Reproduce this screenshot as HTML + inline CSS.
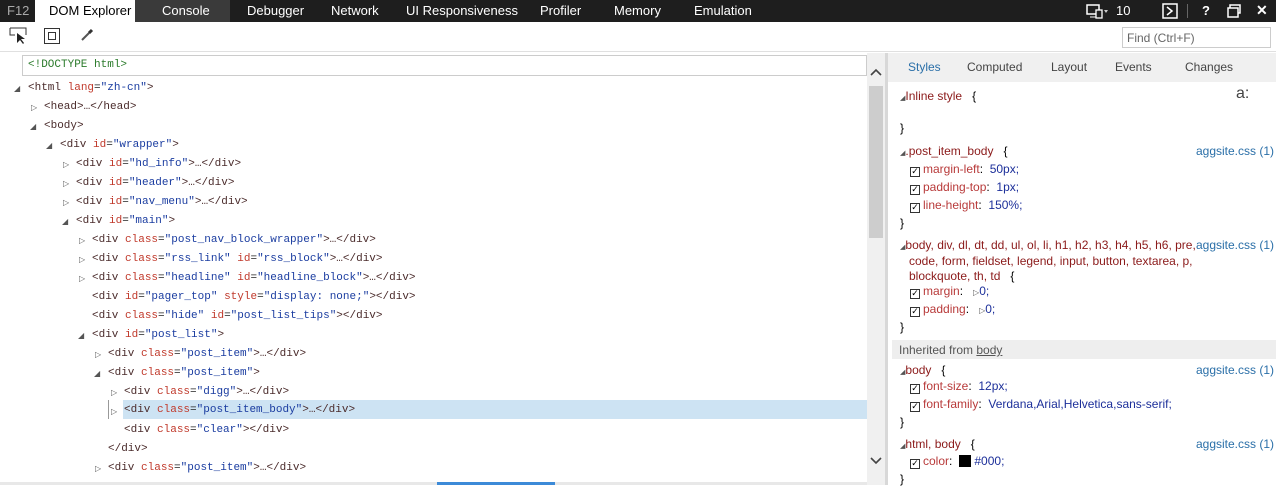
<!DOCTYPE html>
<html><head><meta charset="utf-8"><style>
*{margin:0;padding:0;box-sizing:border-box}
body{width:1276px;height:485px;overflow:hidden;background:#fff;font-family:"Liberation Sans",sans-serif;position:relative}
.top{position:absolute;left:0;top:0;width:1276px;height:22px;background:#1e1e1e;color:#fff;font-size:13px}
.top span{position:absolute;top:3px}
.tb{position:absolute;top:22px;left:0;width:1276px;height:30px;background:#fff;border-bottom:1px solid #e0e0e0}
.left{position:absolute;left:0;top:53px;width:867px;height:432px}
#rows{font-family:"Liberation Mono",monospace;font-size:11px}
.row{position:absolute;height:19px;line-height:19px;white-space:pre;color:#222}
.t{color:#4a2b2b}.a{color:#c0392b}.v{color:#1a3ca0}
.tri{position:absolute;font-size:8px;color:#555;font-family:"DejaVu Sans",sans-serif;line-height:10px}
.right{position:absolute;left:888px;top:53px;width:388px;height:432px;font-size:12px}
.r{position:absolute;white-space:nowrap;line-height:18px}
.sel{color:#8b1a1a}.p{color:#b83a3a}.val{color:#1c2f9a}
.lnk{position:absolute;right:2px;color:#2a6fa8}
.cb{display:inline-block;width:10px;height:10px;border:1px solid #333;vertical-align:-1px;margin-right:3px;font-size:9px;line-height:8px;text-align:center;font-family:"DejaVu Sans",sans-serif}
</style></head><body>
<div class="top">
<span style="left:7px;color:#aaa">F12</span>
<div style="position:absolute;left:35px;top:0;width:100px;height:22px;background:#fff"></div>
<span style="left:49px;color:#000">DOM Explorer</span>
<div style="position:absolute;left:135px;top:0;width:95px;height:22px;background:#3a3a3a"></div>
<span style="left:162px">Console</span>
<span style="left:247px">Debugger</span>
<span style="left:331px">Network</span>
<span style="left:406px">UI Responsiveness</span>
<span style="left:540px">Profiler</span>
<span style="left:614px">Memory</span>
<span style="left:694px">Emulation</span>
<svg style="position:absolute;left:1086px;top:4px" width="22" height="15"><rect x="1" y="1" width="12" height="9" fill="none" stroke="#fff" stroke-width="1.5"/><rect x="10" y="6" width="6" height="8" fill="#1e1e1e" stroke="#fff" stroke-width="1.3"/><path d="M4 13h6" stroke="#fff"/><path d="M18 6l2 3 2-3z" fill="#ccc"/></svg>
<span style="left:1116px">10</span>
<svg style="position:absolute;left:1162px;top:3px" width="16" height="16"><rect x="1" y="1" width="14" height="14" fill="none" stroke="#fff" stroke-width="1.5"/><path d="M5 4l5 4-5 4" fill="none" stroke="#fff" stroke-width="1.5"/></svg>
<div style="position:absolute;left:1187px;top:4px;width:1px;height:14px;background:#666"></div>
<span style="left:1202px;font-weight:bold">?</span>
<svg style="position:absolute;left:1227px;top:4px" width="14" height="14"><rect x="3" y="1" width="10" height="8" fill="none" stroke="#fff" stroke-width="1.5"/><rect x="1" y="4" width="10" height="9" fill="#1e1e1e" stroke="#fff" stroke-width="1.5"/></svg>
<span style="left:1256px;font-weight:bold;font-size:14px;top:2px">✕</span>
</div>
<div class="tb">
<svg style="position:absolute;left:9px;top:5px" width="20" height="18"><path d="M1 1h16v7" fill="none" stroke="#333"/><path d="M1 1v7h5" fill="none" stroke="#333"/><path d="M8 6l0 10 3-3 3 4 1-1-3-4h4z" fill="#222"/></svg>
<svg style="position:absolute;left:44px;top:6px" width="16" height="16"><rect x="0.5" y="0.5" width="15" height="15" fill="none" stroke="#333"/><rect x="4.5" y="4.5" width="7" height="7" fill="none" stroke="#333"/></svg>
<svg style="position:absolute;left:80px;top:6px" width="14" height="14"><path d="M2 12l7-7" stroke="#555" stroke-width="2"/><path d="M9 5l3-3" stroke="#333" stroke-width="3"/></svg>
<div style="position:absolute;left:1122px;top:5px;width:149px;height:21px;border:1px solid #ccc;font-size:12px;color:#666;padding:3px 4px">Find (Ctrl+F)</div>
</div>
<div class="left">
<div style="position:absolute;left:22px;top:2px;width:845px;height:21px;border:1px solid #ccc"></div>
<div style="position:absolute;left:123px;top:347px;width:744px;height:19px;background:#cde3f3"></div>
<div style="position:absolute;left:108px;top:347px;width:1px;height:19px;background:#999"></div>
</div>
<div id="rows" style="position:absolute;left:0;top:54px">
<div class="row" style="left:28px;top:2px;color:#2a7a2a">&lt;!DOCTYPE html&gt;</div>
<div class="tri" style="left:14px;top:30px">◢</div><div class="row" style="left:28px;top:25px"><span class="t">&lt;html</span> <span class="a">lang</span>=<span class="v">"zh-cn"</span><span class="t">&gt;</span></div>
<div class="tri" style="left:31px;top:49px">▷</div><div class="row" style="left:44px;top:44px"><span class="t">&lt;head&gt;…&lt;/head&gt;</span></div>
<div class="tri" style="left:30px;top:68px">◢</div><div class="row" style="left:44px;top:63px"><span class="t">&lt;body&gt;</span></div>
<div class="tri" style="left:46px;top:87px">◢</div><div class="row" style="left:60px;top:82px"><span class="t">&lt;div</span> <span class="a">id</span>=<span class="v">"wrapper"</span><span class="t">&gt;</span></div>
<div class="tri" style="left:63px;top:106px">▷</div><div class="row" style="left:76px;top:101px"><span class="t">&lt;div</span> <span class="a">id</span>=<span class="v">"hd_info"</span><span class="t">&gt;…&lt;/div&gt;</span></div>
<div class="tri" style="left:63px;top:125px">▷</div><div class="row" style="left:76px;top:120px"><span class="t">&lt;div</span> <span class="a">id</span>=<span class="v">"header"</span><span class="t">&gt;…&lt;/div&gt;</span></div>
<div class="tri" style="left:63px;top:144px">▷</div><div class="row" style="left:76px;top:139px"><span class="t">&lt;div</span> <span class="a">id</span>=<span class="v">"nav_menu"</span><span class="t">&gt;…&lt;/div&gt;</span></div>
<div class="tri" style="left:62px;top:163px">◢</div><div class="row" style="left:76px;top:158px"><span class="t">&lt;div</span> <span class="a">id</span>=<span class="v">"main"</span><span class="t">&gt;</span></div>
<div class="tri" style="left:79px;top:182px">▷</div><div class="row" style="left:92px;top:177px"><span class="t">&lt;div</span> <span class="a">class</span>=<span class="v">"post_nav_block_wrapper"</span><span class="t">&gt;…&lt;/div&gt;</span></div>
<div class="tri" style="left:79px;top:201px">▷</div><div class="row" style="left:92px;top:196px"><span class="t">&lt;div</span> <span class="a">class</span>=<span class="v">"rss_link"</span> <span class="a">id</span>=<span class="v">"rss_block"</span><span class="t">&gt;…&lt;/div&gt;</span></div>
<div class="tri" style="left:79px;top:220px">▷</div><div class="row" style="left:92px;top:215px"><span class="t">&lt;div</span> <span class="a">class</span>=<span class="v">"headline"</span> <span class="a">id</span>=<span class="v">"headline_block"</span><span class="t">&gt;…&lt;/div&gt;</span></div>
<div class="row" style="left:92px;top:234px"><span class="t">&lt;div</span> <span class="a">id</span>=<span class="v">"pager_top"</span> <span class="a">style</span>=<span class="v">"display: none;"</span><span class="t">&gt;&lt;/div&gt;</span></div>
<div class="row" style="left:92px;top:253px"><span class="t">&lt;div</span> <span class="a">class</span>=<span class="v">"hide"</span> <span class="a">id</span>=<span class="v">"post_list_tips"</span><span class="t">&gt;&lt;/div&gt;</span></div>
<div class="tri" style="left:78px;top:277px">◢</div><div class="row" style="left:92px;top:272px"><span class="t">&lt;div</span> <span class="a">id</span>=<span class="v">"post_list"</span><span class="t">&gt;</span></div>
<div class="tri" style="left:95px;top:296px">▷</div><div class="row" style="left:108px;top:291px"><span class="t">&lt;div</span> <span class="a">class</span>=<span class="v">"post_item"</span><span class="t">&gt;…&lt;/div&gt;</span></div>
<div class="tri" style="left:94px;top:315px">◢</div><div class="row" style="left:108px;top:310px"><span class="t">&lt;div</span> <span class="a">class</span>=<span class="v">"post_item"</span><span class="t">&gt;</span></div>
<div class="tri" style="left:111px;top:334px">▷</div><div class="row" style="left:124px;top:329px"><span class="t">&lt;div</span> <span class="a">class</span>=<span class="v">"digg"</span><span class="t">&gt;…&lt;/div&gt;</span></div>
<div class="tri" style="left:111px;top:353px">▷</div><div class="row" style="left:124px;top:347px"><span class="t">&lt;div</span> <span class="a">class</span>=<span class="v">"post_item_body"</span><span class="t">&gt;…&lt;/div&gt;</span></div>
<div class="row" style="left:124px;top:367px"><span class="t">&lt;div</span> <span class="a">class</span>=<span class="v">"clear"</span><span class="t">&gt;&lt;/div&gt;</span></div>
<div class="row" style="left:108px;top:386px"><span class="t">&lt;/div&gt;</span></div>
<div class="tri" style="left:95px;top:410px">▷</div><div class="row" style="left:108px;top:405px"><span class="t">&lt;div</span> <span class="a">class</span>=<span class="v">"post_item"</span><span class="t">&gt;…&lt;/div&gt;</span></div>
</div>
<div style="position:absolute;left:867px;top:53px;width:18px;height:432px;background:#f0f0f0"></div>
<div style="position:absolute;left:869px;top:86px;width:14px;height:152px;background:#cdcdcd"></div>
<svg style="position:absolute;left:870px;top:68px" width="12" height="8"><path d="M1 7l5-5 5 5" fill="none" stroke="#444" stroke-width="1.6"/></svg>
<svg style="position:absolute;left:870px;top:457px" width="12" height="8"><path d="M1 1l5 5 5-5" fill="none" stroke="#444" stroke-width="1.6"/></svg>
<div style="position:absolute;left:885px;top:53px;width:3px;height:432px;background:#d8d8d8"></div>
<div style="position:absolute;left:0;top:482px;width:867px;height:3px;background:#e8e8e8"></div>
<div style="position:absolute;left:437px;top:482px;width:118px;height:3px;background:#3c8ad8"></div>
<div class="right">
<div style="position:absolute;left:0;top:0;width:388px;height:29px;background:#f0f0f0"></div>
<div class="r" style="left:20px;top:5px;color:#2a6fa8">Styles</div>
<div class="r" style="left:79px;top:5px;color:#444">Computed</div>
<div class="r" style="left:163px;top:5px;color:#444">Layout</div>
<div class="r" style="left:227px;top:5px;color:#444">Events</div>
<div class="r" style="left:297px;top:5px;color:#444">Changes</div>
<div class="r" style="left:12px;top:34px"><span style="font-size:7px;color:#555">◢</span><span class="sel">Inline style</span> &nbsp; {</div>
<div class="r" style="left:348px;top:32px;font-size:16px;color:#444">a:</div>
<div class="r" style="left:12px;top:66px">}</div>
<div class="r" style="left:12px;top:89px"><span style="font-size:7px;color:#555">◢</span><span class="sel">.post_item_body</span> &nbsp; {</div>
<div class="r lnk" style="top:89px">aggsite.css (1)</div>
<div class="r" style="left:22px;top:107px"><span class="cb">✓</span><span class="p">margin-left</span>: &nbsp;<span class="val">50px;</span></div>
<div class="r" style="left:22px;top:125px"><span class="cb">✓</span><span class="p">padding-top</span>: &nbsp;<span class="val">1px;</span></div>
<div class="r" style="left:22px;top:143px"><span class="cb">✓</span><span class="p">line-height</span>: &nbsp;<span class="val">150%;</span></div>
<div class="r" style="left:12px;top:161px">}</div>
<div class="r" style="left:12px;top:183px;width:296px;overflow:hidden"><span style="font-size:7px;color:#555">◢</span><span class="sel">body, div, dl, dt, dd, ul, ol, li, h1, h2, h3, h4, h5, h6, pre,</span></div>
<div class="r lnk" style="top:183px">aggsite.css (1)</div>
<div class="r" style="left:21px;top:199px" ><span class="sel">code, form, fieldset, legend, input, button, textarea, p,</span></div>
<div class="r" style="left:21px;top:214px"><span class="sel">blockquote, th, td</span> &nbsp; {</div>
<div class="r" style="left:22px;top:229px"><span class="cb">✓</span><span class="p">margin</span>: &nbsp; <span style="font-size:8px;color:#555">▷</span><span class="val">0;</span></div>
<div class="r" style="left:22px;top:247px"><span class="cb">✓</span><span class="p">padding</span>: &nbsp; <span style="font-size:8px;color:#555">▷</span><span class="val">0;</span></div>
<div class="r" style="left:12px;top:265px">}</div>
<div style="position:absolute;left:4px;top:287px;width:384px;height:19px;background:#eee"></div>
<div class="r" style="left:11px;top:288px;color:#555">Inherited from <u>body</u></div>
<div class="r" style="left:12px;top:308px"><span style="font-size:7px;color:#555">◢</span><span class="sel">body</span> &nbsp; {</div>
<div class="r lnk" style="top:308px">aggsite.css (1)</div>
<div class="r" style="left:22px;top:324px"><span class="cb">✓</span><span class="p">font-size</span>: &nbsp;<span class="val">12px;</span></div>
<div class="r" style="left:22px;top:342px"><span class="cb">✓</span><span class="p">font-family</span>: &nbsp;<span class="val">Verdana,Arial,Helvetica,sans-serif;</span></div>
<div class="r" style="left:12px;top:360px">}</div>
<div class="r" style="left:12px;top:382px"><span style="font-size:7px;color:#555">◢</span><span class="sel">html, body</span> &nbsp; {</div>
<div class="r lnk" style="top:382px">aggsite.css (1)</div>
<div class="r" style="left:22px;top:399px"><span class="cb">✓</span><span class="p">color</span>: &nbsp;<span style="display:inline-block;width:12px;height:12px;background:#000;vertical-align:-2px"></span> <span class="val">#000;</span></div>
<div class="r" style="left:12px;top:417px">}</div>
</div>
</body></html>
